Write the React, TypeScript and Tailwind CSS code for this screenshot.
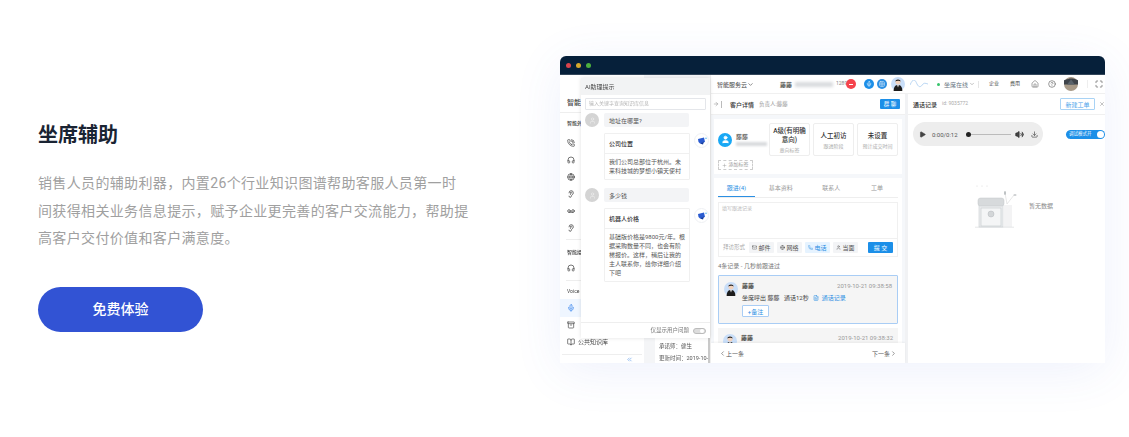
import { ChevronDown, ChevronLeft, ChevronRight, ArrowRight, Mail, Globe, Phone, User, Plus, Play, Volume2, Download, X, Home, HelpCircle, Maximize, Headphones, Mic, Archive, BookOpen, PhoneCall, Ear, Voicemail, ChevronsLeft, FileText, Grid2x2 } from "lucide-react";

const FONT = "font-['Roboto','Noto_Sans_CJK_SC',sans-serif]";

// 穿西装的小头像，截图里反复出现
function AgentAvatar({ size }: { size: number }) {
  return (
    <svg width={size} height={size} viewBox="0 0 20 20" className="shrink-0">
      <circle cx="10" cy="10" r="10" fill="#c9def8" />
      <circle cx="10" cy="7" r="3.6" fill="#f1d2bd" />
      <path d="M6.2 6.6 C6.2 2.4 13.8 2.4 13.8 6.6 C12.5 5 8 4.6 6.2 6.6Z" fill="#222" />
      <path d="M3.8 20 C3.8 13 7 11.5 10 11.5 C13 11.5 16.2 13 16.2 20Z" fill="#1c1c1c" />
      <path d="M8.8 11.6 L10 15 L11.2 11.6Z" fill="#fff" />
    </svg>
  );
}

function BotBadge() {
  return (
    <div className="flex h-[15px] w-[15px] shrink-0 items-center justify-center rounded-full border border-[#eef0f3] bg-white">
      <svg width="10" height="8" viewBox="0 0 10 8">
        <path d="M1 2 L7 0.5 L8 5 L3 6.5 L1.5 5Z" fill="#2a5bd0" />
        <path d="M3 6.5 L7 4.5 L6 7.5Z" fill="#123a9a" />
        <circle cx="9" cy="1.2" r="0.8" fill="#58b8f0" />
      </svg>
    </div>
  );
}

function Question({ text }: { text: string }) {
  return (
    <div className="flex items-center gap-[5px] pl-[4px] pr-[21px]">
      <div className="flex h-[14px] w-[14px] shrink-0 items-center justify-center rounded-full bg-[#d4d4d4]">
        <User size={7} color="#f2f2f2" />
      </div>
      <div className="flex h-[14px] flex-1 items-center rounded-[2px] bg-[#f3f4f6] px-[5px] text-[6px] text-[#555]">{text}</div>
    </div>
  );
}

function Answer({ title, body, h }: { title: string; body: string; h: string }) {
  return (
    <div className="flex items-start gap-[4px] pl-[23px] pr-[3px]">
      <div className={`w-[86px] shrink-0 rounded-[1px] border border-[#f0f0f0] bg-white ${h}`}>
        <div className="flex h-[20px] items-center border-b border-[#f0f0f0] px-[4px] text-[6px] font-medium text-[#333]">{title}</div>
        <p className="px-[4px] pt-[3px] text-[6px] leading-[9px] text-[#555]">{body}</p>
      </div>
      <BotBadge />
    </div>
  );
}

function AssistantPanel() {
  return (
    <div className="absolute left-[21px] top-[3px] z-10 flex h-[260px] w-[129px] flex-col bg-white shadow-[0_0_4px_rgba(0,0,0,0.12)]">
      <div className="flex h-[17px] items-center bg-[#f2f3f4] px-[4px] text-[6px] text-[#444]">AI助理提示</div>
      <div className="mx-[4px] mt-[3px] flex h-[12px] items-center rounded-[1px] border border-[#e4e6ea] px-[3px] text-[5px] text-[#b5b5b5]">输入关键字查询知识库信息</div>
      <div className="mt-[3px] flex flex-1 flex-col gap-[6px]">
        <Question text="地址在哪里?" />
        <Answer title="公司位置" body="我们公司总部位于杭州。未来科技城的梦想小镇天使村" h="h-[47px]" />
        <div className="mt-[2px]">
          <Question text="多少钱" />
        </div>
        <Answer title="机器人价格" body="基础版价格是9800元/年。根据采购数量不同，也会有阶梯报价。这样，稍后让我的主人联系你，给你详细介绍下吧" h="h-[74px]" />
      </div>
      <div className="flex h-[16px] items-center justify-end gap-[4px] border-t border-[#eeeeee] pr-[4px] text-[5.5px] text-[#777]">
        仅显示用户问题
        <span className="flex h-[6px] w-[13px] items-center justify-end rounded-full border border-[#bbb] bg-[#ddd] pr-[1px]">
          <span className="h-[4px] w-[4px] rounded-full bg-white" />
        </span>
      </div>
    </div>
  );
}

function SideIcon({ children }: { children: React.ReactNode }) {
  return <div className="flex h-[17px] items-center pl-[7px] text-[#444] [&_svg]:stroke-[2.2]">{children}</div>;
}

function Sidebar() {
  return (
    <div className="flex w-[84px] shrink-0 flex-col bg-white text-[6px] text-[#444]">
      <div className="flex h-[39px] items-end border-b border-[#eeeeee] pb-[4px] pl-[7px] text-[7px] font-medium">智能</div>
      <div className="mt-[7px] pl-[7px] text-[5px] font-medium leading-[6px]">智能外</div>
      <div className="mt-[8px] flex flex-col">
        <SideIcon><PhoneCall size={8} /></SideIcon>
        <SideIcon><Headphones size={8} /></SideIcon>
        <SideIcon><Globe size={8} /></SideIcon>
        <SideIcon><Ear size={8} /></SideIcon>
        <SideIcon><Voicemail size={8} /></SideIcon>
        <SideIcon><Ear size={8} /></SideIcon>
      </div>
      <div className="mx-[6px] mt-[3px] border-t border-[#eeeeee]" />
      <div className="mt-[9px] pl-[7px] text-[5px] font-medium leading-[6px]">智能接</div>
      <div className="mt-[4px]"><SideIcon><Headphones size={8} /></SideIcon></div>
      <div className="mx-[6px] mt-[4px] border-t border-[#eeeeee]" />
      <div className="mt-[7px] pl-[7px] text-[5px] leading-[6px]">Voice</div>
      <div className="mt-[5px] flex h-[18px] items-center bg-[#eff6ff] pl-[7px] text-[#2f80ed]"><Mic size={8} /></div>
      <div className="flex h-[17px] items-center pl-[7px]"><Archive size={8} /></div>
      <div className="flex h-[17px] items-center gap-[3px] pl-[7px]"><BookOpen size={8} />公共知识库</div>
      <div className="mx-[2px] mt-[4px] flex flex-1 justify-end border-t border-[#eeeeee] pr-[9px] pt-[1px] text-[#5b9bea]">
        <ChevronsLeft size={7} />
      </div>
    </div>
  );
}

function BehindPanel() {
  return (
    <div className="flex flex-1 justify-end bg-[#f4f5f7] pt-[263px]">
      <div className="w-[55px] overflow-hidden whitespace-nowrap border-r-2 border-[#c9c9c9] bg-white pl-[4px] text-[5.5px] leading-[12px] text-[#555]">
        <div className="pt-[2px]">承诺师：健生</div>
        <div>更新时间：2019-10-1</div>
      </div>
    </div>
  );
}

function TopBar() {
  return (
    <div className="flex h-[19px] shrink-0 items-center whitespace-nowrap border-b border-[#f0f0f0] bg-white pl-[6px] text-[6px] text-[#444] [&>*]:shrink-0">
      <span className="w-[30px]">智能服务云</span>
      <ChevronDown size={7} />
      <span className="ml-[26px] w-[15px] font-medium">藤藤</span>
      <span className="h-[5px] w-[38px] bg-[#d9dbde] blur-[1.5px]" />
      <span className="ml-[3px] w-[10px] text-[5px] text-[#888]">1289</span>
      <span className="flex h-[10px] w-[10px] items-center justify-center rounded-full bg-[#f5434c]">
        <span className="h-[1px] w-[4px] bg-white" />
      </span>
      <span className="ml-[8px] flex h-[10px] w-[10px] items-center justify-center rounded-full bg-[#1c8fe8]"><Mic size={6} color="#fff" /></span>
      <span className="ml-[3px] flex h-[10px] w-[10px] items-center justify-center rounded-full bg-[#2b8fe3]"><Grid2x2 size={6} color="#fff" /></span>
      <span className="ml-[4px]"><AgentAvatar size={14} /></span>
      <svg width="18" height="8" viewBox="0 0 18 8" className="ml-[5px]">
        <path d="M0 5 C3 -2 5 -1 7 4 C9 8 11 7 13 4 C14 3 15 3 18 4" fill="none" stroke="#a9cdf0" strokeWidth="0.8" />
      </svg>
      <span className="ml-[9px] h-[3px] w-[3px] rounded-full bg-[#36c46b]" />
      <span className="ml-[4px] w-[24px] text-[#6b7785]">坐席在线</span>
      <ChevronDown size={6} color="#888" className="ml-[1px]" />
      <span className="ml-[3px] h-[7px] border-l border-[#e5e5e5]" />
      <span className="ml-[10px] w-[10px] text-[5px]">企业</span>
      <span className="ml-[11px] w-[10px] text-[5px]">费用</span>
      <Home size={8} color="#777" className="ml-[11px]" />
      <HelpCircle size={8} color="#666" className="ml-[9px]" />
      <svg width="14" height="14" viewBox="0 0 13 13" className="ml-[8px]">
        <circle cx="6.5" cy="6.5" r="6.5" fill="#a89a88" />
        <path d="M0 7 H13 V3 C9 1 4 1 0 3Z" fill="#3f444a" />
        <path d="M3 7 L6.5 2 L10 7Z" fill="#59626a" />
      </svg>
      <span className="ml-[9px] h-[8px] border-l border-[#eeeeee]" />
      <Maximize size={8} color="#555" className="ml-[7px]" />
    </div>
  );
}

function StatTile({ main, sub, tall }: { main: string; sub: string; tall?: boolean }) {
  return (
    <div className="flex h-[33px] flex-1 flex-col items-center justify-center rounded-[2px] border border-[#eeeeee] bg-white text-center">
      <div className={`text-[6.5px] font-medium text-[#333] ${tall ? "leading-[9px]" : "leading-[10px]"}`}>{main}</div>
      <div className="mt-[2px] text-[5px] leading-[6px] text-[#aaa]">{sub}</div>
    </div>
  );
}

function Chip({ icon, label, active }: { icon: React.ReactNode; label: string; active?: boolean }) {
  return (
    <span className={`flex h-[11px] w-[25px] items-center justify-center gap-[1px] rounded-[1px] text-[6px] ${active ? "bg-[#e6f3ff] text-[#2b8fe3]" : "bg-[#f3f4f6] text-[#555]"}`}>
      {icon}
      {label}
    </span>
  );
}

function CustomerColumn() {
  return (
    <div className="flex w-[197px] shrink-0 flex-col border-r-[3px] border-[#f1f2f4] bg-white">
      <div className="flex h-[21px] shrink-0 items-center border-b border-[#f0f0f0] pl-[2px] pr-[5px]">
        <ArrowRight size={6} color="#888" />
        <span className="ml-[2px] h-[7px] border-l border-[#bbb]" />
        <span className="ml-[8px] text-[6px] font-medium text-[#333]">客户详情</span>
        <span className="ml-[5px] text-[5.5px] text-[#999]">负责人:藤藤</span>
        <span className="ml-auto flex h-[10px] w-[20px] items-center justify-center rounded-[1px] bg-[#1c8fe8] text-[5.5px] text-white">群 聊</span>
      </div>
      <div className="flex min-h-0 flex-1 flex-col gap-[4px] overflow-hidden bg-[#f5f7fa] px-[3px] pt-[4px]">
        <div className="flex h-[55px] shrink-0 flex-col bg-white px-[4px] pt-[4px]">
          <div className="flex">
            <div className="flex w-[51px] shrink-0 items-center gap-[4px]">
              <span className="flex h-[14px] w-[14px] items-center justify-center rounded-full bg-[#19a8f5]"><User size={9} color="#fff" fill="#fff" /></span>
              <div>
                <div className="text-[6px] leading-[8px] text-[#333]">藤藤</div>
                <div className="mt-[1px] h-[4px] w-[31px] bg-[#d9dbde] blur-[1px]" />
              </div>
            </div>
            <div className="flex flex-1 gap-[3px]">
              <StatTile main="A级(有明确意向)" sub="意向标签" tall />
              <StatTile main="人工初访" sub="跟进阶段" />
              <StatTile main="未设置" sub="预计成交时间" />
            </div>
          </div>
          <div className="mt-[4px] flex h-[10px] w-[35px] items-center justify-center gap-[1px] rounded-[1px] border border-dashed border-[#ccc] text-[5px] text-[#999]">
            <Plus size={5} />添加标签
          </div>
        </div>
        <div className="flex flex-1 flex-col bg-white px-[4px]">
          <div className="flex h-[20px] shrink-0 items-center border-b border-[#eeeeee] text-[6px] text-[#999]">
            <span className="flex h-full w-[37px] items-center justify-center border-b border-[#2b8fe3] text-[#2b8fe3]">跟进(4)</span>
            <span className="w-[52px] text-center">基本资料</span>
            <span className="w-[50px] text-center">联系人</span>
            <span className="w-[42px] text-center">工单</span>
          </div>
          <div className="mt-[4px] flex h-[55px] shrink-0 flex-col border border-[#f0f0f0]">
            <div className="h-[35px] px-[3px] pt-[2px] text-[5px] text-[#bbb]">填写跟进记录</div>
            <div className="flex flex-1 items-center gap-[3px] border-t border-[#f0f0f0] pl-[4px]">
              <span className="mr-[-1px] w-[24px] whitespace-nowrap text-[5.5px] text-[#aaa]">拜访形式</span>
              <Chip icon={<Mail size={5} />} label="邮件" />
              <Chip icon={<Globe size={5} />} label="网络" />
              <Chip active icon={<Phone size={5} />} label="电话" />
              <Chip icon={<User size={5} />} label="当面" />
              <span className="ml-[7px] flex h-[11px] w-[25px] items-center justify-center rounded-[1px] bg-[#1c8fe8] text-[6px] text-white">提 交</span>
            </div>
          </div>
          <div className="mt-[6px] text-[6px] leading-[6px] text-[#777]">4条记录 - 几秒前跟进过</div>
          <div className="mt-[6px] flex h-[49px] shrink-0 flex-col rounded-[1px] border border-[#a9cdf5] bg-[#f5f5f5] px-[5px] pt-[6px]">
            <div className="flex items-start">
              <AgentAvatar size={14} />
              <div className="ml-[4px] flex flex-1 justify-between text-[6px] leading-[7px]">
                <span className="font-medium text-[#333]">藤藤</span>
                <span className="text-[#999]">2019-10-21 09:38:58</span>
              </div>
            </div>
            <div className="-mt-[2px] flex items-center pl-[18px] text-[6px] leading-[8px] text-[#444]">
              坐席呼出 藤藤&nbsp;&nbsp;&nbsp;通话12秒
              <FileText size={6} color="#2b8fe3" className="ml-[4px]" />
              <span className="ml-[3px] text-[#2b8fe3]">通话记录</span>
            </div>
            <div className="ml-[18px] mt-[3px] flex h-[12px] w-[27px] items-center justify-center rounded-[1px] border border-[#a9cdf5] bg-white text-[6px] text-[#2b8fe3]">+备注</div>
          </div>
          <div className="mt-[4px] flex h-[30px] shrink-0 items-start bg-[#f5f5f5] px-[5px] pt-[6px]">
            <AgentAvatar size={14} />
            <div className="ml-[4px] flex flex-1 justify-between text-[6px] leading-[7px]">
              <span className="font-medium text-[#333]">藤藤</span>
              <span className="text-[#999]">2019-10-21 09:38:32</span>
            </div>
          </div>
        </div>
      </div>
      <div className="flex h-[20px] shrink-0 items-center justify-between bg-white px-[8px] text-[6px] text-[#555] shadow-[0_-1px_2px_rgba(0,0,0,0.05)]">
        <span className="flex items-center"><ChevronLeft size={7} />上一条</span>
        <span className="flex items-center">下一条<ChevronRight size={7} /></span>
      </div>
    </div>
  );
}

function EmptyArt() {
  return (
    <svg width="48" height="44" viewBox="0 0 48 44" className="shrink-0">
      <circle cx="3" cy="2" r="0.5" fill="#d0d0d0" />
      <circle cx="8" cy="2" r="0.5" fill="#d0d0d0" />
      <circle cx="13" cy="2" r="0.5" fill="#d0d0d0" />
      <rect x="30" y="21" width="8" height="22" fill="#f3f3f4" />
      <path d="M33 20 L31 9 M33 20 L40 11" stroke="#d8d8d8" strokeWidth="0.6" />
      <ellipse cx="31" cy="9" rx="1" ry="2" fill="#b9bdc0" />
      <ellipse cx="41" cy="11" rx="1.6" ry="0.8" fill="#b9bdc0" />
      <rect x="5" y="20" width="24" height="23" fill="#eceeef" stroke="#c9cdd0" strokeWidth="0.6" />
      <rect x="7" y="24" width="20" height="18" fill="#f4f5f6" stroke="#c4c8cb" strokeWidth="0.6" />
      <rect x="4" y="14" width="26" height="8" rx="2.5" fill="#d7dadc" stroke="#c3c6c9" strokeWidth="0.5" />
      <circle cx="17" cy="30" r="3" fill="#d3d6d8" stroke="#b5b9bc" strokeWidth="0.5" />
      <path d="M1 43.2 H40" stroke="#d4d7d9" strokeWidth="0.6" />
    </svg>
  );
}

function CallColumn() {
  return (
    <div className="flex flex-1 flex-col bg-white">
      <div className="flex h-[21px] shrink-0 items-center border-b border-[#f0f0f0] pl-[5px]">
        <span className="text-[6px] font-medium text-[#333]">通话记录</span>
        <span className="ml-[5px] text-[5px] text-[#aaa]">id: 9035772</span>
        <span className="ml-auto flex h-[12px] w-[35px] items-center justify-center rounded-[1px] border border-[#a9d3f5] text-[6px] text-[#4aa3ea]">新建工单</span>
        <X size={6} color="#888" className="ml-[4px]" />
      </div>
      <div className="flex items-center justify-between pl-[5px] pt-[7px]">
        <div className="flex h-[24px] w-[130px] items-center rounded-full bg-[#ededed] pl-[6px] text-[#333]">
          <Play size={7} fill="#444" stroke="#444" />
          <span className="ml-[6px] w-[29px] whitespace-nowrap text-[6px] text-[#555]">0:00/0:12</span>
          <span className="ml-[5px] h-[5px] w-[5px] rounded-full bg-[#222]" />
          <span className="h-[1px] w-[40px] bg-[#bbb]" />
          <Volume2 size={9} fill="#444" className="ml-[4px]" />
          <Download size={7} className="ml-[7px]" />
        </div>
        <span className="flex h-[9px] w-[39px] items-center justify-between rounded-full bg-[#1c8fe8] pl-[3px] pr-[1px] text-[4.5px] text-white">
          调试模式开
          <span className="h-[7px] w-[7px] rounded-full bg-white" />
        </span>
      </div>
      <div className="ml-[66px] mt-[38px] flex items-center gap-[7px]">
        <EmptyArt />
        <span className="mb-[2px] whitespace-nowrap text-[6px] text-[#888]">暂无数据</span>
      </div>
    </div>
  );
}

function AppWindow() {
  return (
    <div className="flex h-[307px] w-[545px] flex-col overflow-hidden rounded-t-[6px] shadow-[0_8px_50px_rgba(70,100,220,0.09)]">
      <div className="flex h-[19px] shrink-0 items-center gap-[5px] border-b border-[#33465a] bg-[#06203a] pl-[6px]">
        <span className="h-[5px] w-[5px] rounded-full bg-[#d9434c]" />
        <span className="h-[5px] w-[5px] rounded-full bg-[#d6a92c]" />
        <span className="h-[5px] w-[5px] rounded-full bg-[#4caf3e]" />
      </div>
      <div className={`flex min-h-0 flex-1 blur-[0.5px] ${FONT}`}>
        <div className="relative flex w-[151px] shrink-0 border-r border-[#eeeeee]">
          <Sidebar />
          <BehindPanel />
          <AssistantPanel />
        </div>
        <div className="flex min-w-0 flex-1 flex-col">
          <TopBar />
          <div className="flex min-h-0 flex-1">
            <CustomerColumn />
            <CallColumn />
          </div>
        </div>
      </div>
    </div>
  );
}

export default function App() {
  return (
    <div className={`flex h-[437px] w-[1129px] overflow-hidden bg-white ${FONT}`}>
      <div className="w-[560px] shrink-0 pl-[38px] pt-[121px]">
        <h2 className="text-[20px] font-bold leading-[28px] text-[#1a2433]">坐席辅助</h2>
        <p className="mt-[21px] w-[432px] text-[14px] leading-[27.5px] tracking-[0.35px] text-[#a0a0a0]">
          销售人员的辅助利器，内置26个行业知识图谱帮助客服人员第一时间获得相关业务信息提示，赋予企业更完善的客户交流能力，帮助提高客户交付价值和客户满意度。
        </p>
        <button type="button" className="mt-[34px] h-[45px] w-[165px] rounded-full bg-[#3253d4] text-[14px] font-medium text-white">
          免费体验
        </button>
      </div>
      <div className="pt-[56px]">
        <AppWindow />
      </div>
    </div>
  );
}
